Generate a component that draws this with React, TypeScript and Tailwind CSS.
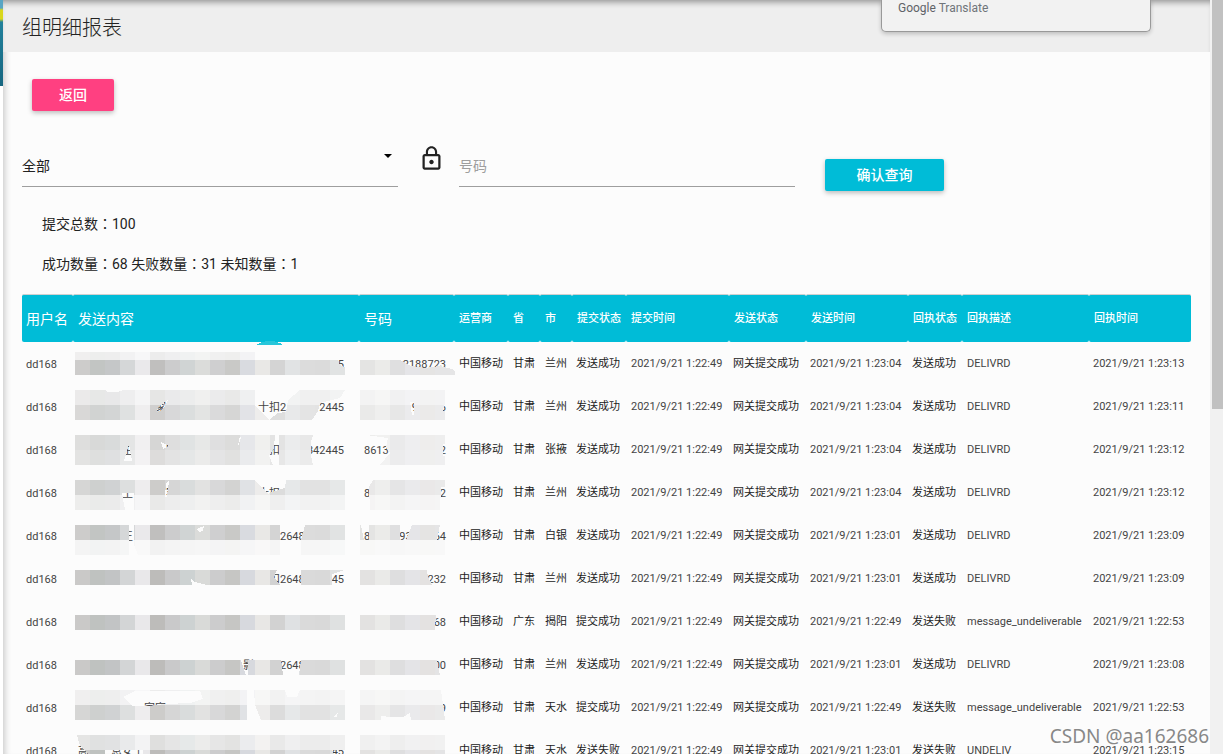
import { MdLockOutline } from "react-icons/md";

type Row = {
  content: [string, string, string];
  number: [string, string];
  city: [string, string];
  submit: string;
  sentAt: string;
  receipt: string;
  desc: string;
  receiptAt: string;
};

const rows: Row[] = [
  { content: ["", "", "5"], number: ["", "2188723"], city: ["甘肃", "兰州"], submit: "发送成功", sentAt: "1:23:04", receipt: "发送成功", desc: "DELIVRD", receiptAt: "1:23:13" },
  { content: ["　　　　　　　家", "十扣2", "2445"], number: ["", "9　　6"], city: ["甘肃", "兰州"], submit: "发送成功", sentAt: "1:23:04", receipt: "发送成功", desc: "DELIVRD", receiptAt: "1:23:11" },
  { content: ["　　　　主　　　客", "　扣", "342445"], number: ["8613", "2"], city: ["甘肃", "张掖"], submit: "发送成功", sentAt: "1:23:04", receipt: "发送成功", desc: "DELIVRD", receiptAt: "1:23:12" },
  { content: ["　　　　王　　　客", "十扣2", ""], number: ["8", "2"], city: ["甘肃", "兰州"], submit: "发送成功", sentAt: "1:23:04", receipt: "发送成功", desc: "DELIVRD", receiptAt: "1:23:12" },
  { content: ["　　　　王", "　　2648", ""], number: ["8", "93　　64"], city: ["甘肃", "白银"], submit: "发送成功", sentAt: "1:23:01", receipt: "发送成功", desc: "DELIVRD", receiptAt: "1:23:09" },
  { content: ["", "　扣2648", "45"], number: ["", "232"], city: ["甘肃", "兰州"], submit: "发送成功", sentAt: "1:23:01", receipt: "发送成功", desc: "DELIVRD", receiptAt: "1:23:09" },
  { content: ["", "", ""], number: ["", "68"], city: ["广东", "揭阳"], submit: "提交成功", sentAt: "1:22:49", receipt: "发送失败", desc: "message_undeliverable", receiptAt: "1:22:53" },
  { content: ["　　　　　　　　　　　　　　　影", "　　2648", ""], number: ["", "00"], city: ["甘肃", "兰州"], submit: "发送成功", sentAt: "1:23:01", receipt: "发送成功", desc: "DELIVRD", receiptAt: "1:23:08" },
  { content: ["　　　　　　家家", "", ""], number: ["", "9"], city: ["甘肃", "天水"], submit: "提交成功", sentAt: "1:22:49", receipt: "发送失败", desc: "message_undeliverable", receiptAt: "1:22:53" },
  { content: ["高　　息女士", "", "45"], number: ["", ""], city: ["甘肃", "天水"], submit: "发送失败", sentAt: "1:23:01", receipt: "发送失败", desc: "UNDELIV", receiptAt: "1:23:15" },
];

const headers = ["用户名", "发送内容", "号码", "运营商", "省", "市", "提交状态", "提交时间", "发送状态", "发送时间", "回执状态", "回执描述", "回执时间"];

const contentTones = [
  "#cac9c8", "#bfc2c0", "#c2c4c5", "#d3d5d6", "#e9e8ea", "#bdbcba", "#c9c9ca", "#cdd2d2", "#d9dad8",
  "#cccccd", "#c6c6c4", "#d7d9de", "#e8e7e5", "#d2d2d2", "#dfe1e3", "#dadada", "#d9d9d9", "#dfe1e1",
];
const numberTones = ["#dedddc", "#e6e6e4", "#d8d8d9", "#dfdfe3", "#dfdddc", "#dfdfe0"];

// y, height, strength of each strip of blocks
const strips = [
  [352, 8, 0.25], [360, 15, 0.95],
  [390, 15, 0.35], [405, 15, 0.7],
  [435, 15, 0.6], [450, 15, 0.5],
  [480, 15, 0.75], [495, 15, 0.3],
  [525, 15, 0.95], [540, 15, 0.15],
  [570, 15, 1],
  [615, 15, 1],
  [660, 15, 1],
  [690, 15, 0.25], [705, 15, 0.75],
  [735, 15, 0.45], [750, 15, 1],
];

// gaps in the blocks where the cell text shows through
const gaps = [
  "M255 352H345V360H255Z M338 360H345V367Q340 367 338 360Z M360 352H460V376L452 369L440 366L425 368L411 366L400 360H360Z",
  "M157 412L158 407L168 400L165 406L161 411Z M105 390H123L117 392H108Z M255 390H300L288 400L286 412L278 413L269 420L255 405Z M345 390L340 398L320 403L318 411L312 420H345Z M410 402H414V415H412Z M444 405H446V411H443Z",
  "M129 444L132 461H124Z M161 442L169 446L163 449Z M240 435L238 446L241 438Z M275 435H279V465H273L269 456L274 448Z M313 435Q308 448 313 465H346V435Z M360 435H366L388 438L386 447L390 453L380 465H360Z M443 444H446V456H443Z",
  "M122 493H134V510H125Z M166 483L169 481L167 497H165Z M254 480H286L285 488L275 491L268 494L262 488Z M360 480H373L369 487L370 510H360Z M446 487H441L440 510H446Z",
  "M129 525H134V545L138 555H129Z M197 529L204 526L203 531L199 532Z M280 525H305L301 540V555H280Z M361 525H369V540H364Z M400 525H412L406 540H400Z M440 525H446V540H437Z",
  "M191 579L195 582L207 585H192Z M277 570H301V585H280L274 577Z M332 574L345 570V585H332Z M427 570H446V585H432L428 577Z",
  "M436 615H446V630H435Z",
  "M241 660H248V675H246Z M281 660H301L299 675H283Z M437 660H446V675H440Z",
  "M123 697L135 691H200L203 699L190 703L165 704L150 706L133 706Z M247 690H254L255 705L261 720H247Z M285 690H300L297 697H287Z M334 717L338 712L337 717Z M381 720V716L390 717H403L410 713L411 720Z M441 690L443 704L445 720H447V690Z",
  "M75 735H77L80 746L88 754H75Z M105 750H143V754H105Z M332 750H345V754H334Z",
];

const BlockStrip = ({ x, y, height, tones, strength }: { x: number; y: number; height: number; tones: string[]; strength: number }) => (
  <>
    <rect x={x} y={y} width={tones.length * 15 - (x === 360 ? 5 : 0)} height={height} fill="#fcfcfc" />
    {tones.map((tone, i) => (
      <rect
        key={i}
        x={x + i * 15}
        y={y}
        width={x === 360 && i === 5 ? (y === 360 ? 20 : 10) : 15}
        height={height}
        fill={tone}
        opacity={strength}
      />
    ))}
  </>
);

const Redaction = () => (
  <svg aria-hidden="true" viewBox="75 340 385 425" className="pointer-events-none absolute top-[46px] left-[53px] h-[425px] w-[385px]" shapeRendering="crispEdges">
    <mask id="gaps" maskUnits="userSpaceOnUse" x="75" y="340" width="385" height="425">
      <rect x="75" y="340" width="385" height="425" fill="#fff" />
      {gaps.map((d) => (
        <path key={d} d={d} fill="#000" />
      ))}
    </mask>
    <g mask="url(#gaps)">
      {strips.map(([y, height, strength]) => (
        <g key={y}>
          <BlockStrip x={75} y={y} height={height} tones={contentTones} strength={strength} />
          <BlockStrip x={360} y={y} height={height} tones={numberTones} strength={height === 8 ? 0 : strength * 0.85} />
        </g>
      ))}
    </g>
    <path d="M256 345Q262 341 270 341T283 345Z" fill="#26c6da" />
  </svg>
);

const ReportTable = () => (
  <div className="relative">
    <table className="w-full table-fixed border-separate border-spacing-0 text-left text-[11px] leading-4 whitespace-nowrap text-[#444]">
      <colgroup>
        <col className="w-[51px]" />
        <col className="w-[286px]" />
        <col className="w-[95px]" />
        <col className="w-[54px]" />
        <col className="w-8" />
        <col className="w-8" />
        <col className="w-[54px]" />
        <col className="w-[103px]" />
        <col className="w-[77px]" />
        <col className="w-[102px]" />
        <col className="w-[54px]" />
        <col className="w-[127px]" />
        <col />
      </colgroup>
      <thead>
        <tr className="h-12 text-white">
          {headers.map((header, i) => (
            <th
              key={header}
              scope="col"
              className={`rounded-xs border-t border-[#d0d0d0] bg-[#00bcd7] p-0 pl-[5px] first:pl-1 ${i < 3 ? "text-sm font-normal" : "font-medium"}`}
            >
              {header}
            </th>
          ))}
        </tr>
      </thead>
      <tbody>
        {rows.map((row, i) => (
          <tr key={i} className="h-[43px]">
            <td className="p-0 pt-[2px] pl-1">dd168</td>
            <td className="p-0 pt-[2px] pr-[15px] pl-[5px]">
              <div className="grid grid-cols-[180px_1fr_auto] whitespace-pre">
                <span>{row.content[0]}</span>
                <span>{row.content[1]}</span>
                <span>{row.content[2]}</span>
              </div>
            </td>
            <td className="p-0 pt-[2px] pr-2 pl-[5px]">
              <div className="flex justify-between whitespace-pre">
                <span>{row.number[0]}</span>
                <span>{row.number[1]}</span>
              </div>
            </td>
            <td className="p-0 pl-[5px] text-[#222]">中国移动</td>
            <td className="p-0 pl-[5px] text-[#222]">{row.city[0]}</td>
            <td className="p-0 pl-[5px] text-[#222]">{row.city[1]}</td>
            <td className="p-0 pl-1 text-[#222]">{row.submit}</td>
            <td className="p-0 pl-[5px]">2021/9/21 1:22:49</td>
            <td className="p-0 pl-1 text-[#222]">网关提交成功</td>
            <td className="p-0 pl-1">2021/9/21 {row.sentAt}</td>
            <td className="p-0 pl-1 text-[#222]">{row.receipt}</td>
            <td className="p-0 pl-[5px]">{row.desc}</td>
            <td className="p-0 pl-1">2021/9/21 {row.receiptAt}</td>
          </tr>
        ))}
      </tbody>
    </table>
    <Redaction />
  </div>
);

const QueryForm = () => (
  <form className="mt-[34px] grid h-[46px] grid-cols-[376fr_61px_336fr_149px_247fr]" onSubmit={(e) => e.preventDefault()}>
    <div className="relative h-[42px] border-b border-[#9e9e9e]">
      <select aria-label="状态" className="h-full w-full appearance-none bg-transparent text-sm text-[#222] outline-none">
        <option>全部</option>
      </select>
      <svg viewBox="0 0 8 4" className="pointer-events-none absolute top-[9px] right-[6px] h-1 w-2">
        <path d="M0 0H8L4 4Z" />
      </svg>
    </div>
    <label htmlFor="number" className="flex pl-5">
      <MdLockOutline aria-label="号码" className="size-[27px] text-[#222]" />
    </label>
    <input
      id="number"
      placeholder="号码"
      className="h-[42px] w-full border-b border-[#9e9e9e] bg-transparent text-sm outline-none placeholder:text-[#9e9e9e]"
    />
    <div className="flex items-end pl-[30px]">
      <button className="h-8 w-full rounded-xs bg-[#00bcd7] text-sm font-medium whitespace-nowrap text-white shadow-[0_2px_5px_rgba(0,0,0,0.26)]">
        确认查询
      </button>
    </div>
  </form>
);

const App: React.FC = () => {
  return (
    <div className="relative flex h-screen overflow-hidden bg-white font-[Roboto,'Noto_Sans_CJK_SC',sans-serif] text-[#222]">
      <div className="w-[3px] shrink-0">
        <div className="h-[86px] bg-[linear-gradient(#58a5c4_0px,#58a5c4_8px,#d9d71c_10px,#d9d71c_19px,#22819c_22px,#166680)]" />
      </div>
      <main className="min-w-0 flex-1 overflow-hidden bg-[#fcfcfc] shadow-[inset_7px_0_6px_-5px_rgba(0,0,0,0.2)]">
        <header className="flex h-[52px] items-center bg-[#eee] px-[19px] pt-1 shadow-[inset_0_6px_6px_-4px_rgba(0,0,0,0.4)]">
          <h1 className="text-xl font-light">组明细报表</h1>
        </header>
        <div className="px-[19px] pt-[27px]">
          <button className="ml-[10px] block h-8 w-[82px] rounded-xs bg-[#ff4081] text-sm font-medium text-white shadow-[0_2px_5px_rgba(0,0,0,0.26)]">
            返回
          </button>
          <QueryForm />
          {/* TC face centres the fullwidth colon */}
          <div className="mt-[13px] mb-[10px] pl-5 font-[Roboto,'Noto_Sans_CJK_TC',sans-serif] text-sm leading-10">
            <p lang="zh-TW">提交总数：100</p>
            <p lang="zh-TW">成功数量：68 失败数量：31 未知数量：1</p>
          </div>
          <ReportTable />
        </div>
      </main>
      <div className="w-[13px] shrink-0 bg-[#f1f1f1] pl-[2px]">
        <div className="h-[409px] bg-[#c1c1c1]" />
      </div>
      <div className="absolute top-0 right-[72px] h-8 w-[270px] rounded-b-[5px] border border-t-0 border-[#999] bg-[#f2f2f2] pl-4 text-xs leading-4 text-[#70757a] shadow-[0_2px_4px_rgba(0,0,0,0.2)]">
        <span className="text-[#5f6368]">Google</span> Translate
      </div>
      <p className="absolute right-[14px] bottom-1 font-['Noto_Sans',sans-serif] text-[19px] leading-7 text-[#888] [text-shadow:0_0_2px_#fff]">
        CSDN @aa162686
      </p>
    </div>
  );
};

export default App;
